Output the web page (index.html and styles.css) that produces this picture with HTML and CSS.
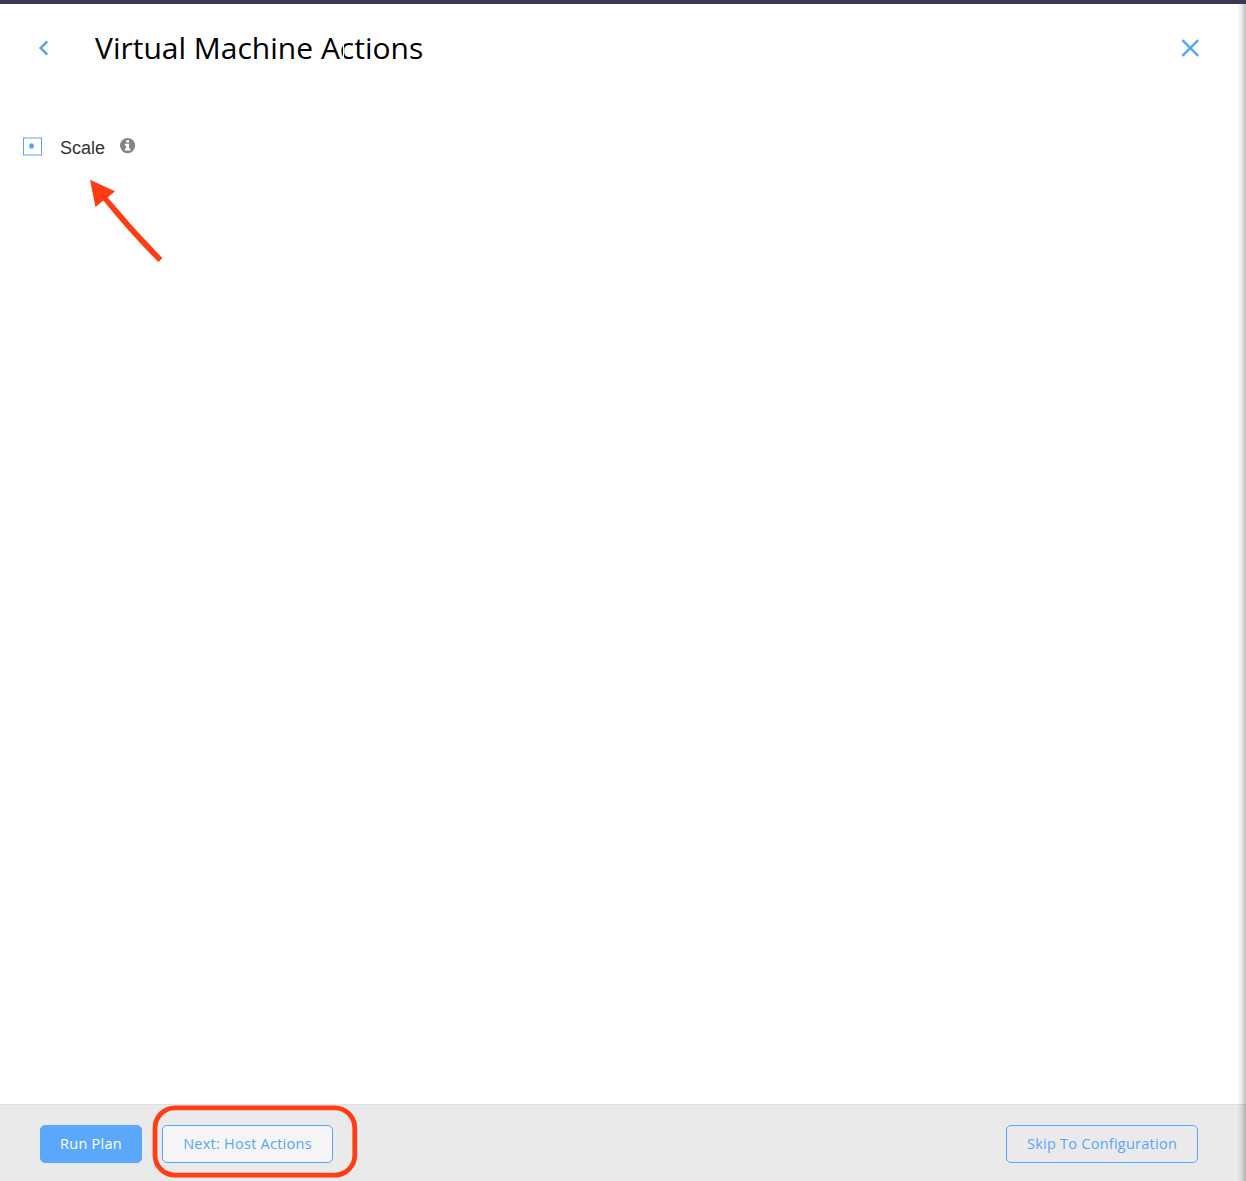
FILE: index.html
```html
<!DOCTYPE html>
<html lang="en">
<head>
<meta charset="utf-8">
<title>Virtual Machine Actions</title>
<link rel="stylesheet" href="styles.css">
</head>
<body>
<div class="panel">
  <header class="header">
    <button class="icon-button back" aria-label="Back">
      <svg width="12" height="16" viewBox="0 0 12 16"><path d="M10.2 1.4 3.6 8l6.6 6.6" fill="none" stroke="currentColor" stroke-width="2.5"/></svg>
    </button>
    <h1 class="title">Virtual Machine Actions</h1>
    <button class="icon-button close" aria-label="Close">
      <svg width="18" height="18" viewBox="0 0 18 18"><path d="M1.4 1.1l15.8 15.8M17.2 1.1 1.4 16.9" fill="none" stroke="currentColor" stroke-width="2.5"/></svg>
    </button>
  </header>
  <main class="content">
    <div class="option">
      <span class="checkbox"><svg width="5" height="6" viewBox="0 0 5 6"><ellipse cx="2.5" cy="3" rx="2.4" ry="2.7" fill="currentColor"/></svg></span>
      <span class="option-label">Scale</span>
      <svg class="info" width="16" height="16" viewBox="0 0 16 16"><circle cx="7.6" cy="7.6" r="7.6" fill="#848484"/><path d="M6.1 2.2h3v2.3h-3zM4.9 5.7h4.2v4.9h1.4v2H4.9v-2h1.3V7.7H4.9z" fill="#fff"/></svg>
    </div>
  </main>
  <footer class="footer">
    <button class="button primary">Run Plan</button>
    <button class="button next">Next: Host Actions</button>
    <button class="button skip">Skip To Configuration</button>
  </footer>
</div>
<div class="edge-shadow"></div>
<svg class="arrow" width="80" height="90" viewBox="0 0 80 90"><path d="M5 4.7 30 16.3 22.7 22.5Q48.5 53.5 77.3 83L73.5 87Q44 57.5 18.3 25.5L10.5 32Z" fill="#ff3c14"/></svg>
<svg class="highlight" width="210" height="76" viewBox="0 0 210 76"><rect x="5" y="4.9" width="199.8" height="67.2" rx="20" fill="none" stroke="#ff3c14" stroke-width="4.8"/></svg>
</body>
</html>
```
FILE: styles.css
```css
* { box-sizing: border-box; }
body { margin: 0; height: 1181px; overflow: hidden; position: relative; background: #fff; }
.panel { height: 1181px; display: flex; flex-direction: column; border-top: 4px solid #3d3654; }
.header { height: 88px; padding: 0 47px 0 37px; display: flex; align-items: center; }
.icon-button { padding: 0; border: 0; background: none; color: #57a5fb; display: flex; }
.title { position: relative; margin: 0 0 0 46px; font: 400 30px/40px "Open Sans", sans-serif; color: #000; white-space: nowrap; }
.title::after { content: ""; position: absolute; left: 248px; top: 10px; width: 1px; height: 26px; background: #fff; }
.close { margin-left: auto; }
.content { flex: 1; padding: 45px 23px; }
.option { display: flex; align-items: flex-start; }
.checkbox { display: flex; width: 19px; height: 19px; border: 1px solid #57a5fb; border-top: 2px solid #abd2fd; border-bottom: 2px solid #abd2fd; color: #57a5fb; padding: 4px 0 0 5px; }
.option-label { margin: 0 15px 0 18px; font: 18px/22px "Liberation Sans", Arial, sans-serif; color: #333; }
.info { margin-top: 1px; }
.footer { height: 77px; padding: 20px 48px 0 40px; display: flex; align-items: flex-start; background: #eaeaea; border-top: 1px solid #dfdfdf; }
.button { height: 38px; padding: 0; border: 1px solid #57a5fb; border-radius: 5px; background: transparent; color: #57a5fb; font: 370 14.5px/36px "Open Sans", sans-serif; letter-spacing: .25px; white-space: nowrap; }
.primary { width: 102px; background: #5aa7fc; border-color: #5aa7fc; color: #fff; }
.next { width: 171px; margin-left: 20px; background: #f5f5f5; }
.skip { width: 192px; margin-left: auto; }
.edge-shadow { position: absolute; top: 4px; right: 0; bottom: 0; width: 9px; background: linear-gradient(to right, rgba(0,0,0,0), rgba(0,0,0,.07) 45%, rgba(0,0,0,.25)); }
.arrow { position: absolute; left: 85px; top: 175px; }
.highlight { position: absolute; left: 150px; top: 1103px; }
```
